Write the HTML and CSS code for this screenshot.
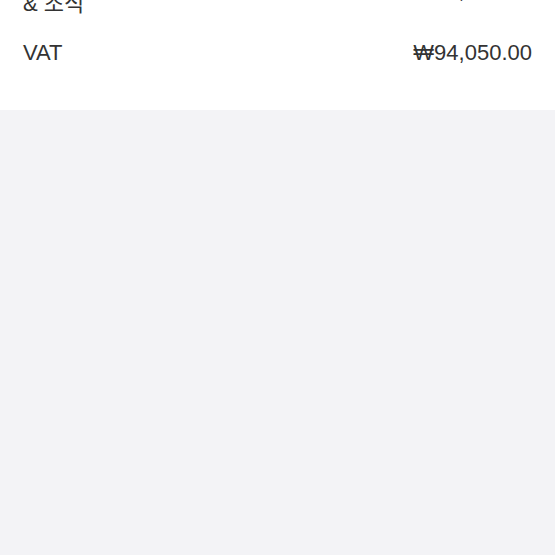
FILE: index.html
```html
<!DOCTYPE html>
<html>
<head>
	<meta name="viewport" content="width=device-width, initial-scale=1">
	<title>결제 요약</title>
	<link rel="stylesheet" href="styles.css">
</head>
<body>
	<div class="summary">
		<div class="row">
			<div class="label">디럭스 더블룸<br>&amp; 조식</div>
			<div class="price">₩940,500.00</div>
		</div>
		<div class="row">
			<div class="label">VAT</div>
			<div class="price">₩94,050.00</div>
		</div>
	</div>
</body>
</html>
```

FILE: styles.css
```css
body {
	font-family: "Liberation Sans", "Noto Sans CJK KR", sans-serif;
	background-color: #f3f3f6;
	color: #333;
	margin: 0;
	padding: 0;
}
.summary {
	display: flex;
	flex-direction: column;
	gap: 23px;
	margin-top: -55px;
	padding: 20px 23px 44px 23px;
	background-color: #fff;
}
.row {
	display: flex;
	justify-content: space-between;
	align-items: center;
	font-size: 22px;
	line-height: 26px;
}
.price {
	text-align: right;
}
```
